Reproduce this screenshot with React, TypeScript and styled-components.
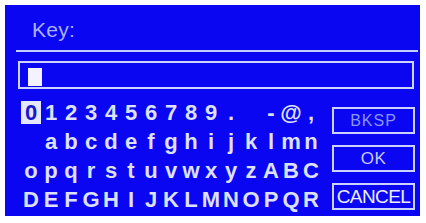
import React from 'react';
import styled, { createGlobalStyle } from 'styled-components';

const GlobalStyle = createGlobalStyle`
  html, body {
    margin: 0;
    padding: 0;
    background: #ffffff;
  }
  * {
    box-sizing: border-box;
  }
`;

const Screen = styled.div`
  margin: 5px;
  width: 415px;
  height: 211px;
  background: #0a06f2;
  display: flex;
  flex-direction: column;
  font-family: "Liberation Sans", Arial, sans-serif;
  color: #dde0ff;
  overflow: hidden;
`;

const Header = styled.div`
  height: 45px;
  padding: 14px 0 0 27px;
  font-size: 21px;
  line-height: 22px;
  color: #aab2ff;
  letter-spacing: 0.3px;
`;

const Divider = styled.div`
  height: 2px;
  margin: 0 2px 0 11px;
  background: #c4cbff;
`;

const InputBox = styled.div`
  margin: 9px 0 0 13px;
  width: 396px;
  height: 28px;
  border: 2px solid #cdd3ff;
  padding: 5px 8px 1px;
  display: flex;
`;

const Cursor = styled.div`
  width: 14px;
  height: 18px;
  background: #f2f3ff;
`;

const Body = styled.div`
  margin-top: 9px;
  display: flex;
  gap: 11px;
  padding-left: 16px;
`;

const Keys = styled.div`
  display: grid;
  grid-template-columns: repeat(15, 20px);
  grid-auto-rows: 29px;
`;

const Key = styled.div`
  display: flex;
  align-items: center;
  justify-content: center;
  font-size: 22px;
  font-weight: 700;
  line-height: 29px;
`;

const Selected = styled.span<{ $active: boolean }>`
  display: inline-block;
  width: 22px;
  line-height: 23px;
  text-align: center;
  background: ${(p) => (p.$active ? '#e4e7ff' : 'transparent')};
  color: ${(p) => (p.$active ? '#1a18c8' : 'inherit')};
`;

const Buttons = styled.div`
  display: flex;
  flex-direction: column;
  gap: 11px;
  padding-top: 9px;
`;

const Button = styled.div<{ $tone: string; $size: number; $spacing: number }>`
  width: 83px;
  height: 27px;
  border: 2px solid #ccd2ff;
  display: flex;
  align-items: center;
  justify-content: center;
  font-size: ${(p) => p.$size}px;
  letter-spacing: ${(p) => p.$spacing}px;
  color: ${(p) => p.$tone};
  white-space: nowrap;
`;

const rows = [
  '0123456789. -@,',
  ' abcdefghijklmn',
  'opqrstuvwxyzABC',
  'DEFGHIJKLMNOPQR',
];

const buttons = [
  { label: 'BKSP', tone: '#8c95f4', size: 16, spacing: 1 },
  { label: 'OK', tone: '#c6cbff', size: 17, spacing: 0.5 },
  { label: 'CANCEL', tone: '#eceeff', size: 19, spacing: -0.6 },
];

const App = () => (
  <>
    <GlobalStyle />
    <Screen>
      <Header>Key:</Header>
      <Divider />
      <InputBox>
        <Cursor />
      </InputBox>
      <Body>
        <Keys>
          {rows.map((row, r) => row.split('').map((ch, c) => (
            <Key key={`${r}-${c}`}>
              <Selected $active={r === 0 && c === 0}>{ch === ' ' ? '\u00a0' : ch}</Selected>
            </Key>
          )))}
        </Keys>
        <Buttons>
          {buttons.map((b) => (
            <Button key={b.label} $tone={b.tone} $size={b.size} $spacing={b.spacing}>
              {b.label}
            </Button>
          ))}
        </Buttons>
      </Body>
    </Screen>
  </>
);

export default App;
